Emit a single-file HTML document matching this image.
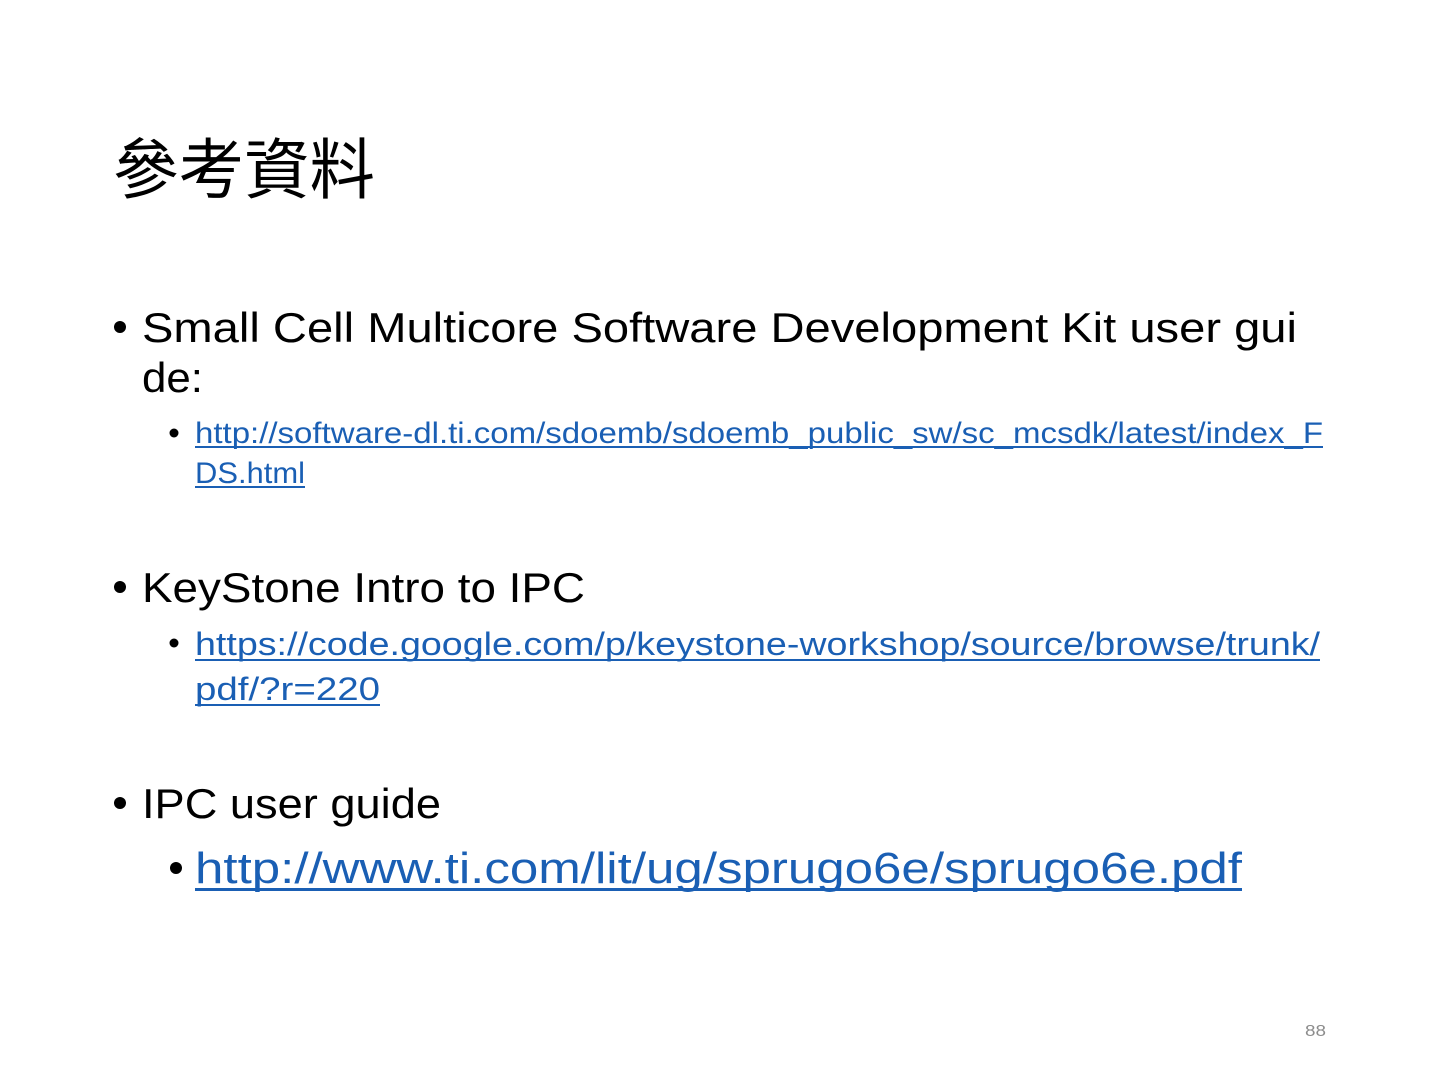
<!DOCTYPE html>
<html><head><meta charset="utf-8"><style>
html,body{margin:0;padding:0;background:#fff;width:1440px;height:1080px;overflow:hidden}
svg{display:block}
text{font-family:"Liberation Sans","Noto Sans CJK JP",sans-serif}
</style></head><body>
<svg width="1440" height="1080" viewBox="0 0 1440 1080" xmlns="http://www.w3.org/2000/svg">
<text x="113" y="193" font-size="66" fill="#000" style='font-family:"Noto Sans CJK TC",sans-serif' textLength="262" lengthAdjust="spacingAndGlyphs">參考資料</text>

<circle cx="120" cy="327" r="6" fill="#000"/>
<text x="142" y="342" font-size="42" fill="#000" textLength="1155" lengthAdjust="spacingAndGlyphs">Small Cell Multicore Software Development Kit user gui</text>
<text x="142" y="392" font-size="42" fill="#000" textLength="61" lengthAdjust="spacingAndGlyphs">de:</text>

<circle cx="174" cy="433" r="4.5" fill="#000"/>
<text x="195" y="443" font-size="30" fill="#1a5fb4" textLength="1128" lengthAdjust="spacingAndGlyphs">http://software-dl.ti.com/sdoemb/sdoemb_public_sw/sc_mcsdk/latest/index_F</text>
<rect x="195" y="446" width="1128" height="2" fill="#1a5fb4"/>
<text x="195" y="483" font-size="30" fill="#1a5fb4" textLength="110" lengthAdjust="spacingAndGlyphs">DS.html</text>
<rect x="195" y="486" width="110" height="2" fill="#1a5fb4"/>

<circle cx="120" cy="587" r="6" fill="#000"/>
<text x="142" y="602" font-size="42" fill="#000" textLength="443" lengthAdjust="spacingAndGlyphs">KeyStone Intro to IPC</text>

<circle cx="174" cy="643" r="4.5" fill="#000"/>
<text x="195" y="655" font-size="32" fill="#1a5fb4" textLength="1125" lengthAdjust="spacingAndGlyphs">https://code.google.com/p/keystone-workshop/source/browse/trunk/</text>
<rect x="195" y="659" width="1125" height="2" fill="#1a5fb4"/>
<text x="195" y="700" font-size="32" fill="#1a5fb4" textLength="185" lengthAdjust="spacingAndGlyphs">pdf/?r=220</text>
<rect x="195" y="704" width="185" height="2" fill="#1a5fb4"/>

<circle cx="120" cy="803" r="6" fill="#000"/>
<text x="142" y="818" font-size="42" fill="#000" textLength="299" lengthAdjust="spacingAndGlyphs">IPC user guide</text>

<circle cx="176" cy="868" r="6" fill="#000"/>
<text x="195" y="883" font-size="44" fill="#1a5fb4" textLength="1047" lengthAdjust="spacingAndGlyphs">http://www.ti.com/lit/ug/sprugo6e/sprugo6e.pdf</text>
<rect x="195" y="888" width="1047" height="3" fill="#1a5fb4"/>

<text x="1305" y="1036" font-size="16" fill="#8c8c8c" textLength="21" lengthAdjust="spacingAndGlyphs">88</text>
</svg>
</body></html>
